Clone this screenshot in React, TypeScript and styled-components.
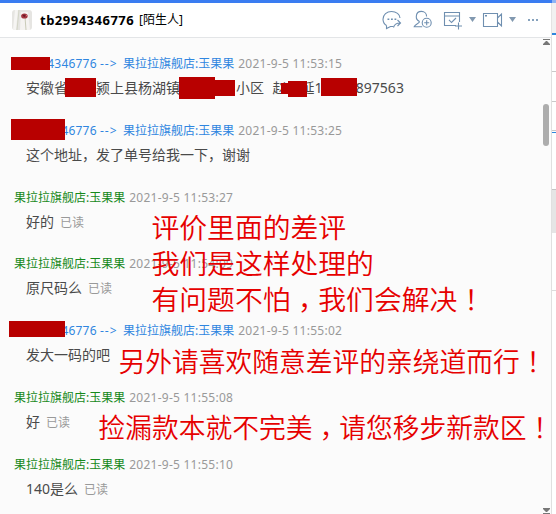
import styled, { createGlobalStyle } from 'styled-components';

const SHOP = '果拉拉旗舰店:玉果果';

type Mask = [x: number, y: number, w: number, h: number];

interface ChatMessage {
  from?: string;
  time: string;
  text: string;
  read?: boolean;
}

const messages: ChatMessage[] = [
  { from: 'tb2994346776', time: '2021-9-5 11:53:15', text: '安徽省\u3000\u3000颍上县杨湖镇\u3000\u3000\u3000\u3000小区\u2002\u200a赵\u3000延1\u2007\u2007\u2007\u2007\u200a897563' },
  { from: 'tb2994346776', time: '2021-9-5 11:53:25', text: '这个地址，发了单号给我一下，谢谢' },
  { time: '2021-9-5 11:53:27', text: '好的', read: true },
  { time: '2021-9-5 11:54:09', text: '原尺码么', read: true },
  { from: 'tb2994346776', time: '2021-9-5 11:55:02', text: '发大一码的吧' },
  { time: '2021-9-5 11:55:08', text: '好', read: true },
  { time: '2021-9-5 11:55:10', text: '140是么', read: true },
];

const masks: Mask[] = [
  [11, 57, 39, 13],
  [65, 78, 31, 19],
  [179, 77, 36, 22],
  [214, 80, 21, 16],
  [281, 83, 10, 11],
  [288, 81, 19, 16],
  [321, 78, 36, 18],
  [11, 119, 54, 21],
  [9, 321, 56, 16],
];

const notes = [
  { x: 151.5, y: 208, size: 27.8, text: '评价里面的差评' },
  { x: 151.5, y: 244, size: 27.8, text: '我们是这样处理的' },
  { x: 151.5, y: 280, size: 27.8, text: '有问题不怕，我们会解决！' },
  { x: 118.5, y: 343, size: 26.75, text: '另外请喜欢随意差评的亲绕道而行！' },
  { x: 98.5, y: 409, size: 26.75, text: '捡漏款本就不完美，请您移步新款区！' },
];

const App = () => (
  <>
    <GlobalStyle />
    <Page>
      <Window>
        <Header>
          <Avatar />
          <UserName>tb2994346776</UserName>
          <Relation>[陌生人]</Relation>
          <Toolbar />
        </Header>
        <Body>
          <MessageList>
            {messages.map((message) => (
              <Message key={message.time}>
                <Meta>
                  {message.from ? (
                    <Sender $customer>
                      <Buyer>{message.from}</Buyer>
                      <Arrow>{'-->'}</Arrow>
                      {SHOP}
                    </Sender>
                  ) : (
                    <Sender>{SHOP}</Sender>
                  )}
                  <Time>{message.time}</Time>
                </Meta>
                <Content>
                  {message.text}
                  {message.read && <Read>已读</Read>}
                </Content>
              </Message>
            ))}
          </MessageList>
          <Scrollbar>
            <EndArrow />
            <Thumb />
            <EndArrow $down />
          </Scrollbar>
        </Body>
      </Window>
      <SideStrip>
        <Cell $height={3} $color="#8db4f5" />
        <Cell $height={30} $color="#f1f1f1" />
        <Cell $height={2} $color="#2f86dd" />
        <Cell $height={36} />
        <Cell $height={1} $color="#c9c9c9" />
        <Cell $height={29} />
        <Cell $height={1} $color="#c9c9c9" />
        <Cell $height={28} />
        <Cell $height={1} $color="#c9c9c9" />
        <Cell $height={1} />
        <Cell $height={1} $color="#2f86dd" />
        <Cell $height={56} />
        <Cell $height={1} $color="#c4c4c4" />
        <Cell $height={43} $color="#e5e5e5" />
        <Cell $height={57} />
        <Cell $height={1} $color="#dcdcdc" />
      </SideStrip>
      {masks.map(([x, y, w, h]) => (
        <Redaction key={`${x}-${y}`} $x={x} $y={y} $w={w} $h={h} />
      ))}
      {notes.map((note) => (
        <Note key={note.text} $x={note.x} $y={note.y} $size={note.size}>
          {note.text.split(/([，！])/).map((part, i) => (
            i % 2 ? <Mark key={i} $low={part === '，'}>{part}</Mark> : part
          ))}
        </Note>
      ))}
    </Page>
  </>
);

const Avatar = () => (
  <AvatarSvg viewBox="0 0 20 20">
    <defs>
      <clipPath id="avatar">
        <rect width="20" height="20" rx="3" />
      </clipPath>
    </defs>
    <g clipPath="url(#avatar)">
      <rect width="20" height="20" fill="#e6e5e2" />
      <path d="M3 0h3L4 20H1z" fill="#f6f5f3" />
      <path d="M9 2l7 0 2 18H8z" fill="#f5f3f1" />
      <path d="M13 7l1 13" stroke="#c9cbb8" />
      <path d="M7 0L5 20" stroke="#d3d5c7" />
      <ellipse cx="12.4" cy="6" rx="3.3" ry="2.6" fill="#a33640" />
      <path d="M10.5 5.4l1.5-1 1.6 1.2-1.2 1.6z" fill="#6d1825" />
      <path d="M14 5l1.4 1" stroke="#d98186" />
    </g>
  </AvatarSvg>
);

const Toolbar = () => (
  <ToolbarSvg viewBox="0 0 166 24">
    <g fill="none" stroke="#6f8fb0" strokeWidth="1.1">
      {/* forward chat */}
      <path d="M6.5 17.5C4 16 3 13.5 3 11.3 3 6.8 6.8 3.5 11.5 3.5s8.5 3 8.5 6.5M6.5 17.5v3l4-2h3" />
      <path d="M13.5 19.5c.8-3 2.8-4.500 6.500-4.500M17.500 12l3 3-3 3" />
      {/* add contact */}
      <path d="M39.5 13.5c-2.3-1-3.4-3-3.2-5.200.2-3 2.300-4.900 5.200-4.900s5.100 2.200 5.100 5M39.500 13.500c.3 1.800-4.500 2.500-5.300 5.200h8" />
      <circle cx="46.7" cy="14.8" r="4.5" />
      <path d="M46.7 12.3v5M44.2 14.8h5" />
      {/* calendar task */}
      <path d="M76 17.5H64.5V4.500h15v9.500M64.500 8h15" />
      <path d="M69 11.8l2.500 2.700 4.500-4.500M78.500 14.500v7M75 18h7" />
      {/* video */}
      <path d="M107.5 5.5h-4v13h14v-13h-10M117.500 10l4-4v12l-4-4" />
    </g>
    <g fill="#6f8fb0">
      <rect x="7.5" y="10.5" width="1.8" height="1.5" />
      <rect x="11" y="10.5" width="1.8" height="1.5" />
      <rect x="14.5" y="10.5" width="1.8" height="1.5" />
      <rect x="105" y="7" width="2" height="1.5" />
      <path d="M89 9h7l-3.500 5zM129 9h7l-3.500 5z" fill="#8299b0" />
      <path d="M148 11h2v2h-2zM152 11h2v2h-2zM156 11h2v2h-2z" fill="#86a2bd" />
    </g>
  </ToolbarSvg>
);

const EndArrow = ({ $down }: { $down?: boolean }) => (
  <EndArrowSvg viewBox="0 0 7 6" $down={$down}>
    <path d="M0 0h7v1H0zM3 2h1l3 3v1H0V5z" fill="#777" />
  </EndArrowSvg>
);

const GlobalStyle = createGlobalStyle`
  body {
    margin: 0;
    overflow: hidden;
    background: #fff;
    font-family: "Noto Sans", "Noto Sans CJK SC", sans-serif;
  }
`;

const Page = styled.div`
  position: relative;
  display: flex;
  width: 556px;
  height: 514px;
  overflow: hidden;
  white-space: nowrap;
`;

const Window = styled.div`
  display: flex;
  flex-direction: column;
  box-sizing: border-box;
  width: 552px;
  border-top: 3px solid #3a7cf1;
`;

const Header = styled.header`
  display: flex;
  flex: none;
  align-items: center;
  box-sizing: border-box;
  height: 35px;
  padding-left: 12px;
  border-right: 1px solid #e3e3e3;
  border-bottom: 1px solid #e3e5e7;
  background: #fff;
  color: #000;
`;

const AvatarSvg = styled.svg`
  width: 20px;
  height: 20px;
`;

const UserName = styled.strong`
  width: 99px;
  margin-left: 8px;
  font-size: 13px;
  line-height: 20px;
  letter-spacing: 0.5px;
`;

const Relation = styled.span`
  font-size: 12px;
  line-height: 20px;
`;

const ToolbarSvg = styled.svg`
  width: 166px;
  height: 24px;
  margin: 0 5px 0 auto;
`;

const Body = styled.div`
  display: flex;
  flex: 1;
  box-sizing: border-box;
  min-height: 0;
  border-right: 1px solid #e0e0e0;
  background: #fbfbfb;
`;

const MessageList = styled.main`
  flex: 1;
  min-height: 0;
  padding: 16px 0 0 14px;
  overflow: hidden;
`;

const Message = styled.article`
  height: 66.8px;
`;

const Meta = styled.div`
  display: flex;
  height: 20px;
  font-size: 12px;
  line-height: 20px;
`;

const Sender = styled.span<{ $customer?: boolean }>`
  display: flex;
  color: ${({ $customer }) => ($customer ? '#2f86e0' : '#16891a')};
`;

const Buyer = styled.span`
  width: 86px;
  letter-spacing: 0.2px;
`;

const Arrow = styled.span`
  width: 23px;
  letter-spacing: 1px;
`;

const Time = styled.time`
  margin-left: 4px;
  color: #999;
  letter-spacing: 0.25px;
`;

const Content = styled.div`
  padding: 4px 0 0 12px;
  color: #4a4a4a;
  font-size: 14px;
  line-height: 20px;
`;

const Read = styled.span`
  margin-left: 6px;
  color: #999;
  font-size: 12px;
`;

const Scrollbar = styled.div`
  display: flex;
  flex-direction: column;
  align-items: center;
  justify-content: space-between;
  width: 10px;
  padding-top: 1px;
`;

const Thumb = styled.div`
  width: 6px;
  height: 42px;
  margin: 59px 0 auto;
  border-radius: 3px;
  background: #adadad;
`;

const EndArrowSvg = styled.svg<{ $down?: boolean }>`
  flex: none;
  width: 7px;
  height: 6px;
  transform: ${({ $down }) => ($down ? 'scaleY(-1)' : 'none')};
`;

const SideStrip = styled.aside`
  display: flex;
  flex: 1;
  flex-direction: column;
  background: #fff;
`;

const Cell = styled.div<{ $height: number; $color?: string }>`
  flex: none;
  height: ${({ $height }) => $height}px;
  background: ${({ $color }) => $color ?? '#fff'};
`;

const Redaction = styled.span<{ $x: number; $y: number; $w: number; $h: number }>`
  position: absolute;
  left: ${({ $x }) => $x}px;
  top: ${({ $y }) => $y}px;
  width: ${({ $w }) => $w}px;
  height: ${({ $h }) => $h}px;
  background: #b80000;
`;

const Note = styled.p<{ $x: number; $y: number; $size: number }>`
  position: absolute;
  left: ${({ $x }) => $x}px;
  top: ${({ $y }) => $y}px;
  margin: 0;
  color: #e60000;
  font-family: "Noto Sans CJK SC", sans-serif;
  font-size: ${({ $size }) => $size}px;
  font-weight: 350;
  line-height: 36px;
`;

// centred full-width punctuation, the comma dropped back to the baseline
const Mark = styled.span<{ $low: boolean }>`
  display: inline-block;
  font-family: "Noto Sans CJK TC", sans-serif;
  transform: translateY(${({ $low }) => ($low ? 8 : 0)}px);
`;

export default App;
